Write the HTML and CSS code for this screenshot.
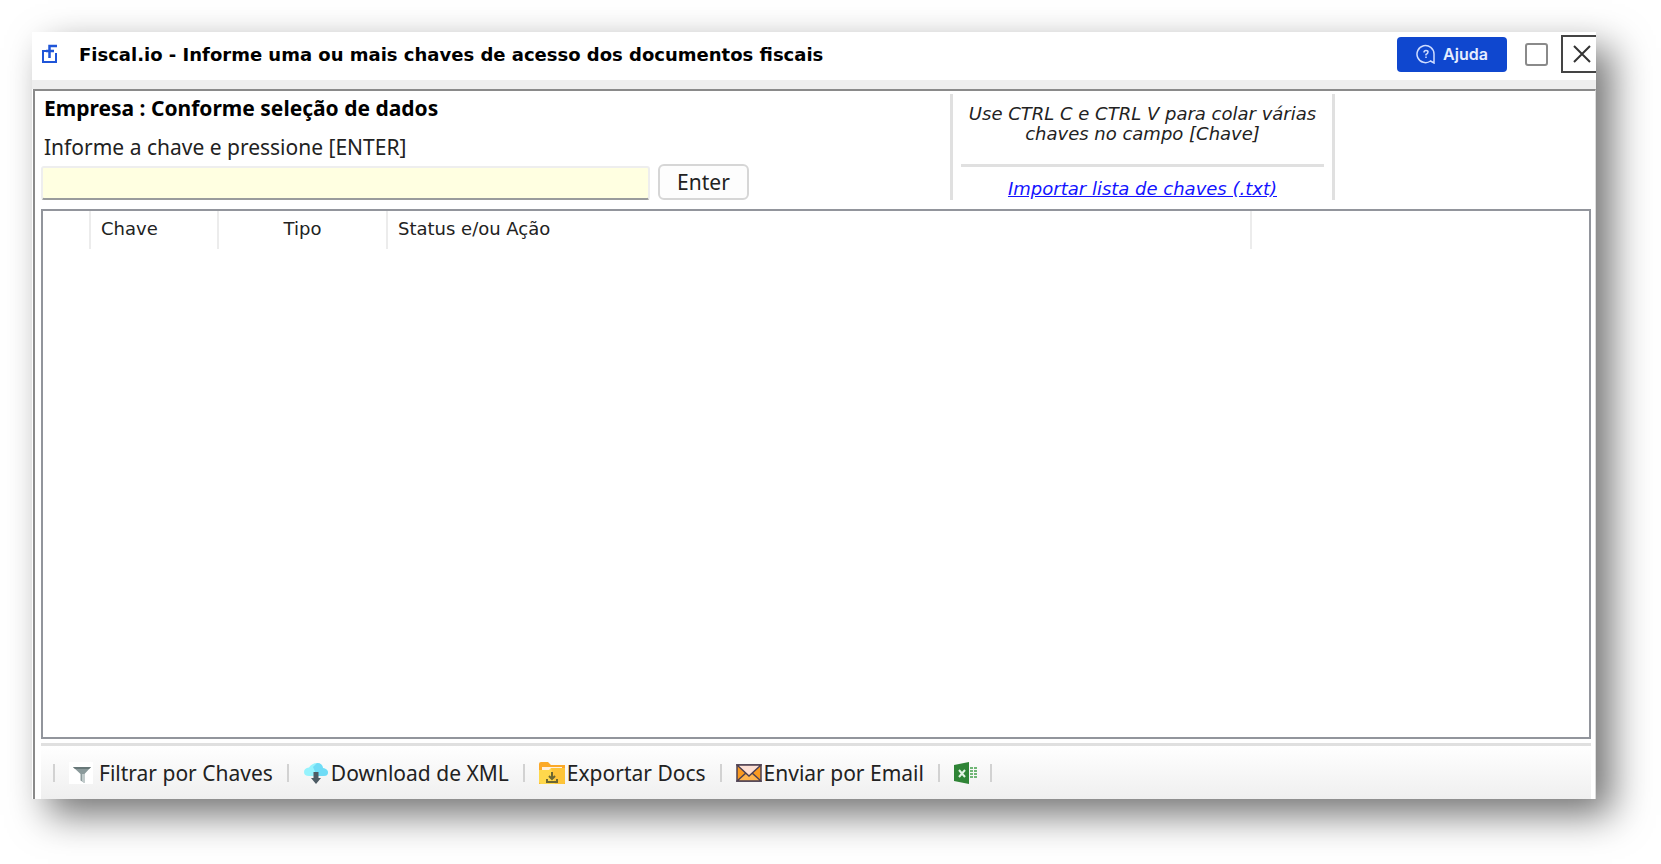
FILE: index.html
```html
<!DOCTYPE html>
<html lang="pt-BR">
  <head>
    <meta charset="utf-8">
    <title>Fiscal.io</title>
    <link rel="stylesheet" href="styles.css">
  </head>
  <body>
    <div class="window">
      <header class="titlebar">
        <svg class="logo" width="16" height="20" viewBox="0 0 16 20" fill="none" stroke="#1f55d8" stroke-width="2">
          <path d="M5 7H1v11h13V9" />
          <path d="M15 2H7.500v12M4 7h8" stroke-width="2.500" />
        </svg>
        <h1>Fiscal.io - Informe uma ou mais chaves de acesso dos documentos fiscais</h1>
        <button class="help">
          <svg width="20" height="20" viewBox="0 0 20 20" fill="none" stroke="#cfdcff" stroke-width="1.500">
            <path d="M18 19v-9a8.500 8.500 0 1 0-3.500 7l3.500 2z" />
            <path d="M8 8.500q0-2 2-2t2 1.500q0 1.500-2 2.500v1M10 12.500v1.500" />
          </svg>
          Ajuda
        </button>
        <button class="maximize" aria-label="Maximizar"></button>
        <button class="close" aria-label="Fechar">
          <svg width="18" height="18" viewBox="0 0 18 18" stroke="#333" stroke-width="2">
            <path d="M1 1l16 16M17 1L1 17" />
          </svg>
        </button>
      </header>

      <main class="panel">
        <section class="top">
          <div class="entry">
            <h2>Empresa : Conforme seleção de dados</h2>
            <label for="chave">Informe a chave e pressione [ENTER]</label>
            <div class="entry-row">
              <input type="text" id="chave">
              <button class="enter">Enter</button>
            </div>
          </div>
          <div class="tips">
            <p>Use CTRL C e CTRL V para colar várias chaves no campo [Chave]</p>
            <a href="#">Importar lista de chaves (.txt)</a>
          </div>
        </section>

        <div class="grid">
          <table>
            <thead>
              <tr>
                <th class="col-mark"></th>
                <th class="col-chave">Chave</th>
                <th class="col-tipo">Tipo</th>
                <th class="col-status">Status e/ou Ação</th>
                <th></th>
              </tr>
            </thead>
            <tbody></tbody>
          </table>
        </div>

        <footer class="toolbar">
          <button>
            <svg class="filter" width="24" height="22" viewBox="0 0 24 22">
              <path fill="#fff" d="M0 0h24v22H0z" />
              <path fill="#8b9a9b" d="M4 5h18l-6.500 7v9l-4-2.500V12z" />
              <path fill="#687879" d="M4 5h18l-2 2H6z" />
              <path fill="#c0caca" d="M13 12h2.500v9L13 19.500z" />
            </svg>
            Filtrar por Chaves
          </button>
          <button>
            <svg width="26" height="22" viewBox="0 0 26 22">
              <path fill="#96f3fd" d="M6 14q-5 0-5-4t5-4.500Q9 1 14 1q5 0 6 5 5 1 5 4.500T20 14z" />
              <path fill="#70dcf6" d="M14 1q5 0 6 5 5 1 5 4.500T20 14h-6L10 5z" />
              <path fill="#4d5b64" d="M10.500 10h5v6H18l-5 6-5-6h2.500z" />
            </svg>
            Download de XML
          </button>
          <button>
            <svg width="26" height="22" viewBox="0 0 26 22">
              <path fill="#fba928" d="M0 2q0-2 2-2h7l3 3h14v19H0z" />
              <path fill="#fff0df" d="M3 5h20v4H3z" />
              <path fill="#ffd84c" d="M0 8h10l2-2h14v14q0 2-2 2H2q-2 0-2-2z" />
              <path fill="#fcb82d" d="M12 6h14v14q0 2-2 2h-8z" opacity=".6" />
              <path fill="none" stroke="#6b6632" stroke-width="2" d="M13 10v7M10 14l3 3 3-3M8 17v3h10v-3" />
            </svg>
            Exportar Docs
          </button>
          <button>
            <svg width="26" height="18" viewBox="0 0 26 18" stroke="#4d4052" stroke-width="1.500">
              <path fill="#fa9a20" d="M1 1h24v16H1z" />
              <path fill="#ffb44c" d="M1 17l9-8h6l9 8z" />
              <path fill="#fde0d5" d="M1 1l12 11L25 1z" />
            </svg>
            Enviar por Email
          </button>
          <button aria-label="Exportar para Excel">
            <svg width="24" height="22" viewBox="0 0 24 22">
              <path fill="#2f8436" d="M0 3l15-3v22L0 19z" />
              <path stroke="#e4f3e5" stroke-width="2" d="M5 8l6 7M11 8l-6 7" />
              <path stroke="#70b676" stroke-width="3" stroke-dasharray="2 1" d="M17.500 5v12M21.500 5v12" />
            </svg>
          </button>
        </footer>
      </main>
    </div>
  </body>
</html>
```

FILE: styles.css
```css
* {
  box-sizing: border-box;
}
body {
  margin: 0;
  padding: 32px 65px 65px 32px;
  min-height: 100vh;
  display: flex;
  background: #fff;
  color: #222;
  font-family: "Noto Sans", sans-serif;
  font-size: 21px;
}
button {
  font: inherit;
  color: inherit;
  cursor: pointer;
}
h1,
h2,
p {
  margin: 0;
}

.window {
  flex: 1;
  display: flex;
  flex-direction: column;
  background: #fff;
  box-shadow: 16px 16px 36px rgba(0, 0, 0, 0.55);
}

/* Title bar */
.titlebar {
  display: flex;
  align-items: center;
  height: 57px;
  padding: 0 0 4px 10px;
  border-bottom: 9px solid #eee;
}
.logo {
  margin-right: 21px;
}
h1 {
  flex: 1;
  color: #000;
  font-family: "DejaVu Sans", sans-serif;
  font-size: 18px;
}
.help {
  display: flex;
  align-items: center;
  justify-content: center;
  gap: 7px;
  width: 110px;
  height: 35px;
  margin-right: 18px;
  border: none;
  border-radius: 4px;
  background: #0f47cf;
  color: #e6edff;
  font-family: Inter, sans-serif;
  font-size: 16px;
  font-weight: 600;
}
.maximize {
  width: 23px;
  height: 23px;
  margin-right: 13px;
  border: 2px solid #8a8a8a;
  border-radius: 3px;
  background: #fff;
}
.close {
  display: flex;
  align-items: center;
  justify-content: center;
  width: 35px;
  height: 38px;
  padding: 0 5px 0 10px;
  border: 2px solid #444;
  border-right: none;
  background: #fff;
}

/* Content */
.panel {
  flex: 1;
  display: flex;
  flex-direction: column;
  margin-left: 1px;
  padding: 3px 4px 0 6px;
  border: 2px solid #8a8a8a;
  border-right: 1px solid #ddd;
  border-bottom: none;
}
.top {
  display: flex;
  margin-bottom: 9px;
}
.entry {
  flex: 0 1 909px;
}
h2 {
  margin-left: 3px;
  color: #000;
  font-size: 21px;
  line-height: 28px;
}
label {
  display: block;
  margin-left: 3px;
  padding-top: 8px;
  line-height: 34px;
}
.entry-row {
  display: flex;
  align-items: flex-end;
  gap: 8px;
}
input {
  width: 609px;
  height: 34px;
  border: 2px solid #eee;
  border-bottom-color: #9a9c9c;
  border-radius: 3px;
  background: #ffffe1;
  font: inherit;
}
.enter {
  width: 91px;
  height: 36px;
  padding: 0;
  border: 2px solid #d6d6d6;
  border-radius: 6px;
  background: #fdfdfd;
}
.tips {
  width: 385px;
  padding: 10px 8px 0;
  border: solid #e0e0e0;
  border-width: 0 3px;
  font-family: "DejaVu Sans", sans-serif;
  font-size: 18px;
  font-style: italic;
  line-height: 20px;
  text-align: center;
}
.tips p {
  padding-bottom: 20px;
  border-bottom: 3px solid #e0e0e0;
}
.tips a {
  display: block;
  margin-top: 12px;
  color: #1414ff;
}

.grid {
  flex: 1;
  border: 2px solid #92959c;
}
table {
  width: 100%;
  border-collapse: collapse;
  table-layout: fixed;
}
th {
  height: 38px;
  padding: 0 10px 4px;
  border-right: 2px solid #ececec;
  font-family: "DejaVu Sans", sans-serif;
  font-size: 18px;
  font-weight: normal;
  text-align: left;
}
th:last-child {
  border-right: none;
}
.col-mark {
  width: 47px;
}
.col-chave {
  width: 128px;
}
.col-tipo {
  width: 169px;
  text-align: center;
}
.col-status {
  width: 864px;
}

/* Bottom actions */
.toolbar {
  display: flex;
  align-items: center;
  height: 56px;
  margin-top: 4px;
  padding-left: 12px;
  border-top: 3px solid #e0e0e0;
  background: linear-gradient(#fff, #efefef);
}
.toolbar button {
  display: flex;
  align-items: center;
  gap: 2px;
  height: 18px;
  padding: 0 14px;
  border: none;
  border-left: 2px solid #d2d2d2;
  background: none;
}
.toolbar button:last-child {
  padding-right: 12px;
  border-right: 2px solid #d2d2d2;
}
.filter {
  margin-right: 4px;
}
```
